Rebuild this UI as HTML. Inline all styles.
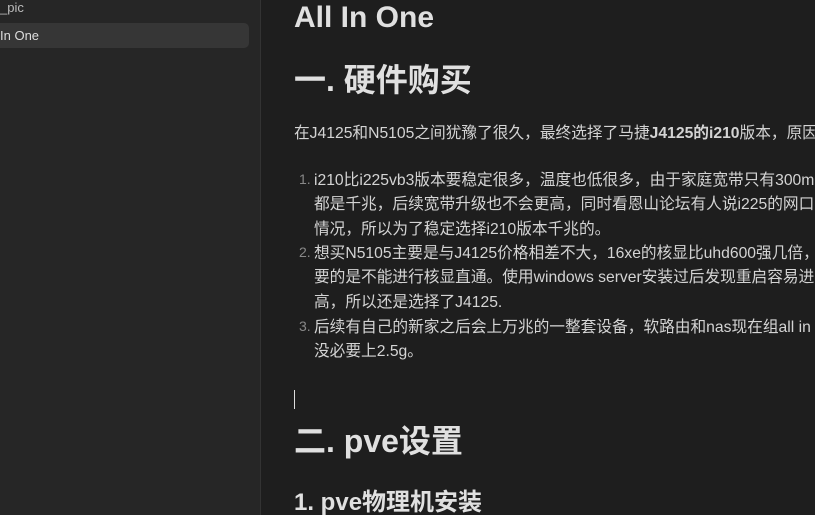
<!DOCTYPE html>
<html><head><meta charset="utf-8"><style>
html,body{margin:0;width:815px;height:515px;overflow:hidden;background:#1e1e1e;font-family:"Liberation Sans","Noto Sans CJK SC",sans-serif;color:#dadada}
.side{position:absolute;left:0;top:0;width:260px;height:515px;background:#262626;border-right:1px solid #333;overflow:hidden}
.main{position:absolute;left:261px;top:0;width:554px;height:515px;overflow:hidden}
.s1{position:absolute;left:0;top:0;font-size:13px;color:#bbb}
.sel{position:absolute;left:-10px;top:23px;width:259px;height:25px;background:#363636;border-radius:5px}
.s2{position:absolute;left:0;top:28px;font-size:13px;color:#ddd}
.t{position:absolute;left:33px;white-space:nowrap}
.h{font-weight:bold;color:#e0e0e0}
.p{font-size:15.7px;color:#d4d4d4}
.n{position:absolute;left:38px;font-size:14px;color:#888}
.cur{position:absolute;left:33px;top:390px;width:1px;height:19px;background:#ddd}
</style></head><body>
<div class="side"><div class="s1">_pic</div><div class="sel"></div><div class="s2">In One</div></div>
<div class="main">
<div class="t h" style="top:1px;font-size:30px">All In One</div>
<div class="t h" style="top:55px;font-size:32px">一. 硬件购买</div>
<div class="t p" style="top:120px">在J4125和N5105之间犹豫了很久，最终选择了马捷<b>J4125的i210</b>版本，原因如下：</div>
<div class="n" style="top:171px">1.</div>
<div class="t p" style="left:53px;top:169px;line-height:24.3px">i210比i225vb3版本要稳定很多，温度也低很多，由于家庭宽带只有300m<br>都是千兆，后续宽带升级也不会更高，同时看恩山论坛有人说i225的网口<br>情况，所以为了稳定选择i210版本千兆的。</div>
<div class="n" style="top:244px">2.</div>
<div class="t p" style="left:53px;top:242px;line-height:24.3px">想买N5105主要是与J4125价格相差不大，16xe的核显比uhd600强几倍，<br>要的是不能进行核显直通。使用windows server安装过后发现重启容易进<br>高，所以还是选择了J4125.</div>
<div class="n" style="top:318px">3.</div>
<div class="t p" style="left:53px;top:316px;line-height:24.3px">后续有自己的新家之后会上万兆的一整套设备，软路由和nas现在组all in<br>没必要上2.5g。</div>
<div class="cur"></div>
<div class="t h" style="top:416px;font-size:32px">二. pve设置</div>
<div class="t h" style="top:482px;font-size:24px">1. pve物理机安装</div>
</div>
</body></html>
